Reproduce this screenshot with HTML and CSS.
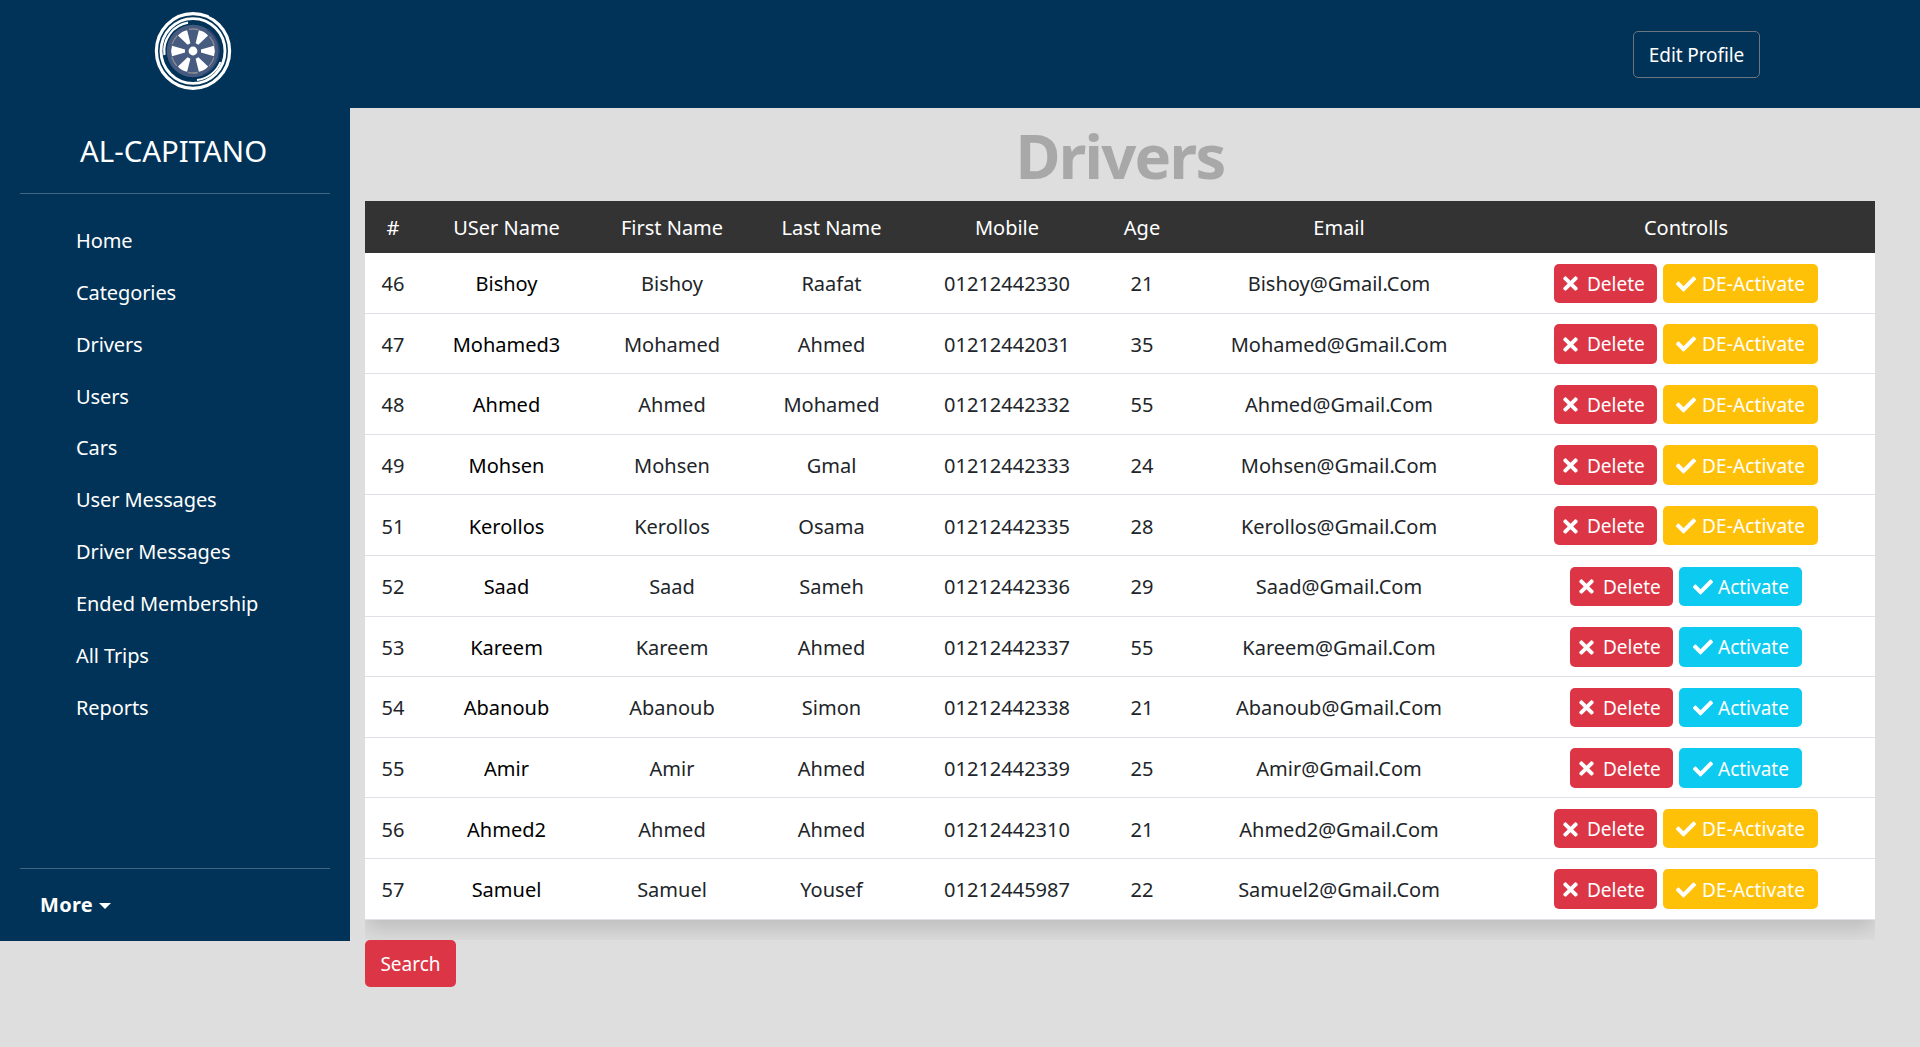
FILE: index.html
```
<!DOCTYPE html>
<html lang="en">
<head>
<meta charset="utf-8">
<title>Drivers</title>
<link rel="stylesheet" href="styles.css">
</head>
<body>
<svg class="sprite" aria-hidden="true">
  <symbol id="times" viewBox="0 0 352 512"><path d="M242.72 256l100.07-100.07c12.28-12.28 12.28-32.19 0-44.48l-22.24-22.24c-12.28-12.28-32.19-12.28-44.48 0L176 189.28 75.93 89.21c-12.28-12.28-32.19-12.28-44.48 0L9.21 111.45c-12.28 12.28-12.28 32.19 0 44.48L109.28 256 9.21 356.07c-12.28 12.28-12.28 32.19 0 44.48l22.24 22.24c12.28 12.28 32.2 12.28 44.48 0L176 322.72l100.07 100.07c12.28 12.28 32.2 12.28 44.48 0l22.24-22.24c12.28-12.28 12.28-32.19 0-44.48L242.72 256z"/></symbol>
  <symbol id="check" viewBox="0 0 512 512"><path d="M173.898 439.404l-166.4-166.4c-9.997-9.997-9.997-26.206 0-36.204l36.203-36.204c9.997-9.998 26.207-9.998 36.204 0L192 312.69 432.095 72.596c9.997-9.997 26.207-9.997 36.204 0l36.203 36.204c9.997 9.997 9.997 26.206 0 36.204l-294.4 294.401c-9.998 9.997-26.207 9.997-36.204-.001z"/></symbol>
</svg>
<header class="topbar">
  <svg class="logo" viewBox="-40 -40 80 80">
    <g fill="none" stroke="#fff">
      <ellipse rx="36.600" ry="37.300" stroke-width="3.200"/>
      <ellipse rx="32" ry="32.400" stroke-width="2.900"/>
      <path stroke-width="2.200" d="M-5 -28.300A28.600 28.600 0 0 0 -28.500 4"/>
      <path stroke-width="2" d="M4 29A29 29 0 0 0 27.500 11"/>
    </g>
    <path d="M16 -35.800L22 -33M29.500 26.500L25.500 30.500" fill="none" stroke="#003357" stroke-width="1.500"/>
    <circle r="26.300" fill="#475b80"/>
    <path d="M14 -22A26 26 0 0 1 10 24" fill="none" stroke="#2a426b" stroke-width="1.600"/>
    <circle r="22" fill="none" stroke="#8d8d92" stroke-width="1.300" stroke-dasharray="10 13.038" stroke-dashoffset="-6.519"/>
    <g fill="#fff">
      <path id="spoke" d="M8 -1.600L21 -5.300Q22.800 0 21 5.300L8 1.600Z"/>
      <use href="#spoke" transform="rotate(60)"/><use href="#spoke" transform="rotate(120)"/><use href="#spoke" transform="rotate(180)"/><use href="#spoke" transform="rotate(240)"/><use href="#spoke" transform="rotate(300)"/>
      <circle r="4.400"/>
    </g>
  </svg>
  <a class="profile">Edit Profile</a>
</header>
<div class="layout">
  <aside class="sidebar">
    <div class="brand">AL-CAPITANO</div>
    <nav class="nav">
      <a>Home</a><a>Categories</a><a>Drivers</a><a>Users</a><a>Cars</a><a>User Messages</a><a>Driver Messages</a><a>Ended Membership</a><a>All Trips</a><a>Reports</a>
    </nav>
    <div class="more">More<span class="caret"></span></div>
  </aside>
  <main class="main">
    <h1>Drivers</h1>
    <div class="table-wrap">
      <table>
        <colgroup><col class="c-id"><col class="c-user"><col class="c-first"><col class="c-last"><col class="c-mobile"><col class="c-age"><col class="c-email"><col></colgroup>
        <thead><tr><th>#</th><th>USer Name</th><th>First Name</th><th>Last Name</th><th>Mobile</th><th>Age</th><th>Email</th><th>Controlls</th></tr></thead>
        <tbody>
          <tr><td>46</td><td class="user">Bishoy</td><td>Bishoy</td><td>Raafat</td><td>01212442330</td><td>21</td><td>Bishoy@Gmail.Com</td><td><div class="actions"><a class="btn delete"><svg><use href="#times"/></svg>Delete</a><a class="btn off"><svg><use href="#check"/></svg>DE-Activate</a></div></td></tr>
          <tr><td>47</td><td class="user">Mohamed3</td><td>Mohamed</td><td>Ahmed</td><td>01212442031</td><td>35</td><td>Mohamed@Gmail.Com</td><td><div class="actions"><a class="btn delete"><svg><use href="#times"/></svg>Delete</a><a class="btn off"><svg><use href="#check"/></svg>DE-Activate</a></div></td></tr>
          <tr><td>48</td><td class="user">Ahmed</td><td>Ahmed</td><td>Mohamed</td><td>01212442332</td><td>55</td><td>Ahmed@Gmail.Com</td><td><div class="actions"><a class="btn delete"><svg><use href="#times"/></svg>Delete</a><a class="btn off"><svg><use href="#check"/></svg>DE-Activate</a></div></td></tr>
          <tr><td>49</td><td class="user">Mohsen</td><td>Mohsen</td><td>Gmal</td><td>01212442333</td><td>24</td><td>Mohsen@Gmail.Com</td><td><div class="actions"><a class="btn delete"><svg><use href="#times"/></svg>Delete</a><a class="btn off"><svg><use href="#check"/></svg>DE-Activate</a></div></td></tr>
          <tr><td>51</td><td class="user">Kerollos</td><td>Kerollos</td><td>Osama</td><td>01212442335</td><td>28</td><td>Kerollos@Gmail.Com</td><td><div class="actions"><a class="btn delete"><svg><use href="#times"/></svg>Delete</a><a class="btn off"><svg><use href="#check"/></svg>DE-Activate</a></div></td></tr>
          <tr><td>52</td><td class="user">Saad</td><td>Saad</td><td>Sameh</td><td>01212442336</td><td>29</td><td>Saad@Gmail.Com</td><td><div class="actions"><a class="btn delete"><svg><use href="#times"/></svg>Delete</a><a class="btn on"><svg><use href="#check"/></svg>Activate</a></div></td></tr>
          <tr><td>53</td><td class="user">Kareem</td><td>Kareem</td><td>Ahmed</td><td>01212442337</td><td>55</td><td>Kareem@Gmail.Com</td><td><div class="actions"><a class="btn delete"><svg><use href="#times"/></svg>Delete</a><a class="btn on"><svg><use href="#check"/></svg>Activate</a></div></td></tr>
          <tr><td>54</td><td class="user">Abanoub</td><td>Abanoub</td><td>Simon</td><td>01212442338</td><td>21</td><td>Abanoub@Gmail.Com</td><td><div class="actions"><a class="btn delete"><svg><use href="#times"/></svg>Delete</a><a class="btn on"><svg><use href="#check"/></svg>Activate</a></div></td></tr>
          <tr><td>55</td><td class="user">Amir</td><td>Amir</td><td>Ahmed</td><td>01212442339</td><td>25</td><td>Amir@Gmail.Com</td><td><div class="actions"><a class="btn delete"><svg><use href="#times"/></svg>Delete</a><a class="btn on"><svg><use href="#check"/></svg>Activate</a></div></td></tr>
          <tr><td>56</td><td class="user">Ahmed2</td><td>Ahmed</td><td>Ahmed</td><td>01212442310</td><td>21</td><td>Ahmed2@Gmail.Com</td><td><div class="actions"><a class="btn delete"><svg><use href="#times"/></svg>Delete</a><a class="btn off"><svg><use href="#check"/></svg>DE-Activate</a></div></td></tr>
          <tr><td>57</td><td class="user">Samuel</td><td>Samuel</td><td>Yousef</td><td>01212445987</td><td>22</td><td>Samuel2@Gmail.Com</td><td><div class="actions"><a class="btn delete"><svg><use href="#times"/></svg>Delete</a><a class="btn off"><svg><use href="#check"/></svg>DE-Activate</a></div></td></tr>
        </tbody>
      </table>
    </div>
    <a class="search">Search</a>
  </main>
</div>
</body>
</html>
```
FILE: styles.css
```
* { box-sizing: border-box; }
body {
  margin: 0;
  background: #dedede;
  color: #212529;
  font: 20px/30px "Noto Sans", sans-serif;
}
.sprite { display: none; }
.topbar {
  height: 108px;
  padding: 0 160px 0 153px;
  display: flex;
  align-items: center;
  justify-content: space-between;
  background: #003357;
}
.logo { width: 80px; height: 80px; margin: -6px 0 0; }
.profile {
  width: 127px;
  height: 47px;
  padding-top: 1px;
  display: flex;
  align-items: center;
  justify-content: center;
  border: 1px solid #6c757d;
  border-radius: 5px;
  color: #fff;
  font-size: 19px;
  letter-spacing: -.1px;
}
.layout { display: flex; align-items: flex-start; }
.sidebar {
  width: 350px;
  height: 833px;
  padding: 0 20px;
  display: flex;
  flex-direction: column;
  background: #003357;
  color: #fff;
}
.brand {
  height: 86px;
  padding: 21px 0 0 60px;
  border-bottom: 1px solid #406681;
  font-size: 29.4px;
  line-height: 44px;
}
.nav {
  flex: 1;
  display: flex;
  flex-direction: column;
  padding: 32px 0 0 56px;
  letter-spacing: -.1px;
}
.nav a { height: 51.85px; }
.more {
  height: 73px;
  padding: 21px 0 0 20px;
  display: flex;
  gap: 6px;
  border-top: 1px solid #406681;
  font-weight: 700;
  letter-spacing: .3px;
}
.caret {
  width: 0;
  height: 0;
  margin-top: 13px;
  border: 6px solid transparent;
  border-top-color: #fff;
  border-bottom: 0;
}
.main { flex: 1; padding: 0 45px 0 15px; }
h1 {
  margin: 0;
  height: 93px;
  color: #a8a8a8;
  font-size: 61.5px;
  line-height: 94px;
  letter-spacing: -1.7px;
  text-align: center;
}
.table-wrap { overflow: hidden; padding-bottom: 20px; }
table {
  width: 100%;
  table-layout: fixed;
  border-collapse: separate;
  border-spacing: 0;
  background: #fff;
  text-align: center;
  box-shadow: 0 10px 20px rgba(0, 0, 0, .15);
}
.c-id { width: 56px; }
.c-user { width: 171px; }
.c-first { width: 160px; }
.c-last { width: 159px; }
.c-mobile { width: 192px; }
.c-age { width: 78px; }
.c-email { width: 316px; }
th {
  height: 52px;
  padding: 2px 0 0;
  background: #333;
  color: #fff;
  font-weight: 400;
}
td {
  height: 60.6px;
  padding: 3px 0 0;
  border-bottom: 1px solid #dee2e6;
}
td:last-child { padding-top: 1px; }
.user { color: #000; }
.actions { display: flex; gap: 6px; justify-content: center; }
.btn {
  height: 39.5px;
  padding-top: 1px;
  display: flex;
  align-items: center;
  border-radius: 5px;
  color: #fff;
  font-size: 19px;
}
.btn svg { fill: currentColor; height: 20px; }
.delete { width: 103px; padding-left: 9px; gap: 8px; background: #dc3545; }
.delete svg { width: 15px; height: 21px; margin-right: 1px; }
.off { width: 155px; padding-left: 13px; gap: 6px; background: #ffc107; letter-spacing: .15px; }
.on { width: 123px; padding-left: 14px; gap: 5px; background: #0dcaf0; }
.off svg, .on svg { width: 20px; }
.search {
  width: 91px;
  height: 47px;
  padding-top: 1px;
  display: flex;
  align-items: center;
  justify-content: center;
  border-radius: 5px;
  background: #dc3545;
  color: #fff;
  font-size: 19px;
}
```
